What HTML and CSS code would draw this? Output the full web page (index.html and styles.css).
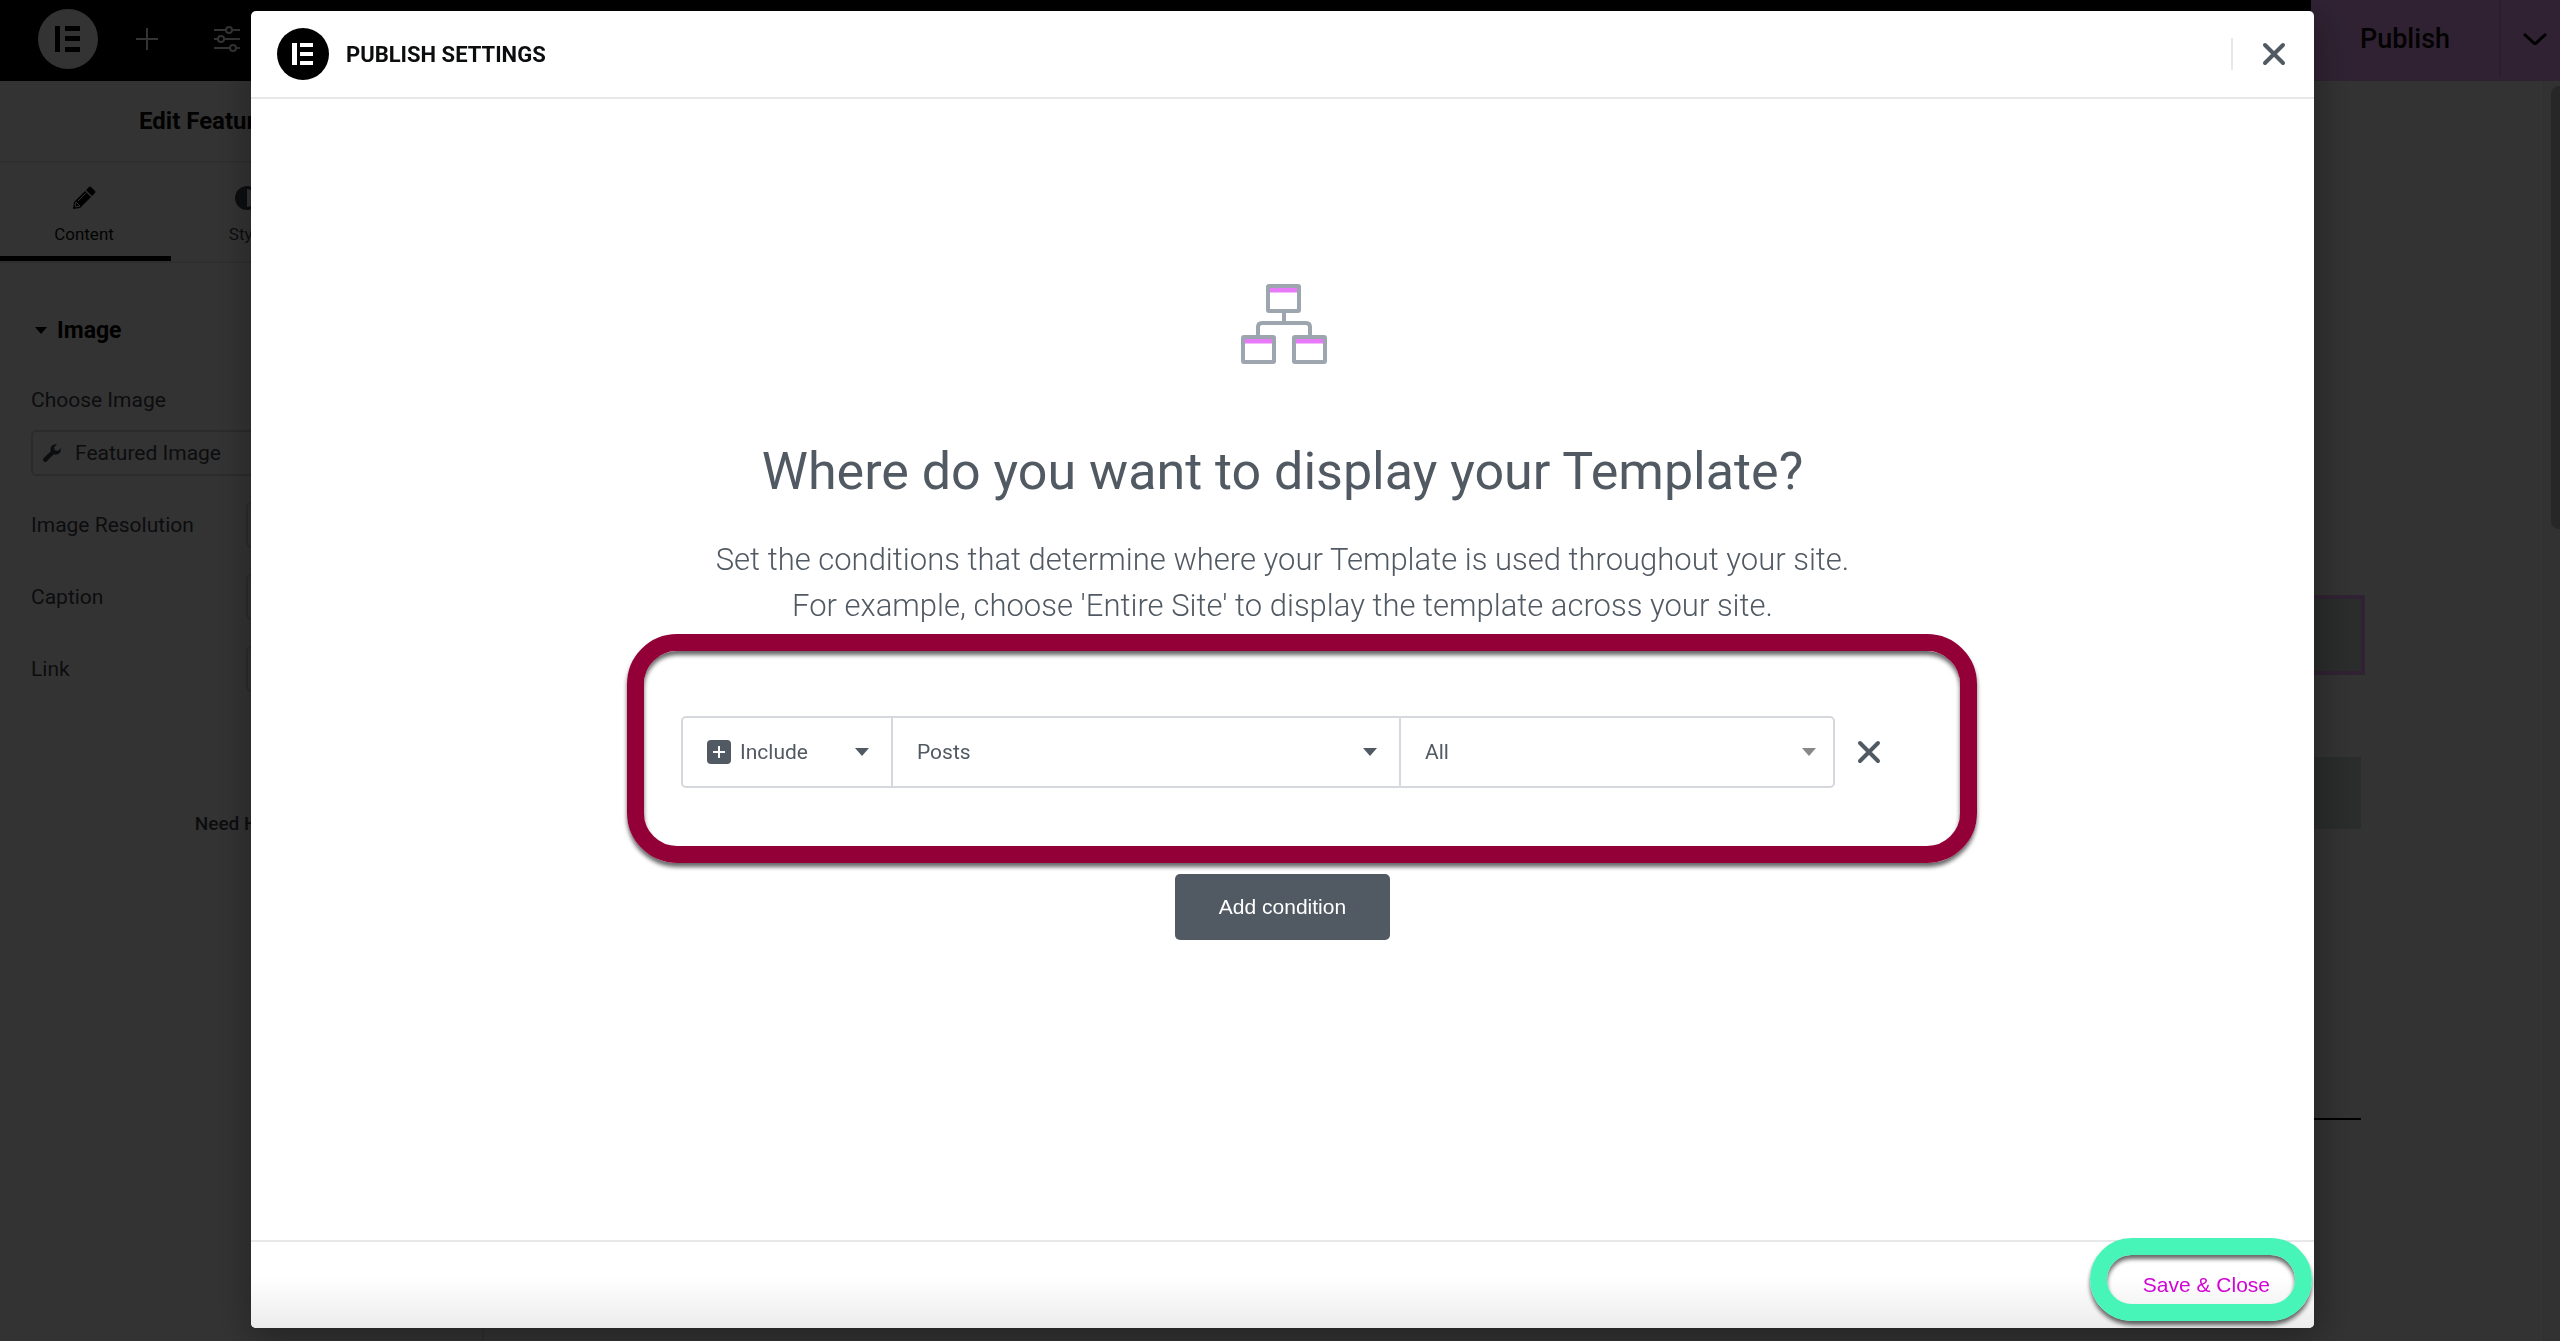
FILE: index.html
```html
<!DOCTYPE html>
<html lang="en">
  <head>
    <meta charset="utf-8" />
    <title>Elementor - Publish Settings</title>
    <meta name="viewport" content="width=device-width, initial-scale=1.0" />
    <link rel="stylesheet" href="styles.css" />
  </head>
  <body>
    <div class="editor">
      <header class="topbar">
        <button class="logo" aria-label="Elementor">
          <svg viewBox="0 0 60 60" width="60" height="60">
            <circle cx="30" cy="30" r="30" fill="currentColor" />
            <path class="mark" d="M17 17h5v26h-5zM27 17h15v5H27zM27 27h15v5H27zM27 38h15v5H27z" />
          </svg>
        </button>
        <button class="tool" aria-label="Add Element">
          <svg viewBox="0 0 24 24" width="24" height="24"><path d="M12 1v22M1 12h22" /></svg>
        </button>
        <button class="tool" aria-label="Site Settings">
          <svg viewBox="0 0 28 28" width="28" height="28">
            <path d="M1 5h12M19 5h8M1 14h3M11 14h16M1 23h16M24 23h3" />
            <circle cx="16" cy="5" r="3" />
            <circle cx="8" cy="14" r="3" />
            <circle cx="20" cy="23" r="3" />
          </svg>
        </button>
        <div class="publish">
          <button class="publish-main">Publish</button>
          <button class="publish-more" aria-label="Save Options">
            <svg viewBox="0 0 24 12" width="24" height="12"><path d="M1 1l11 10L23 1" /></svg>
          </button>
        </div>
      </header>
      <div class="workspace">
        <aside class="panel">
          <h1 class="panel-title">Edit Featured Image</h1>
          <nav class="tabs">
            <button class="tab active">
              <svg viewBox="0 0 24 24" width="24" height="24">
                <path d="M17 1q1-1 2 0l4 4q1 1 0 2l-3 3-6-6zM13 5l6 6L8 22l-7 1 1-7z" />
                <path class="cut" d="M4 16l4 4-4 1-1-1zM6 15l8-8" />
              </svg>
              <span>Content</span>
            </button>
            <button class="tab">
              <svg viewBox="0 0 24 24" width="24" height="24">
                <circle cx="12" cy="12" r="12" />
                <path class="half" d="M12 3a9 9 0 0 1 0 18z" />
              </svg>
              <span>Style</span>
            </button>
            <button class="tab">
              <span>Advanced</span>
            </button>
          </nav>
          <section class="controls">
            <h2 class="section-title">
              <svg viewBox="0 0 12 7" width="12" height="7"><path d="M0 0h12L6 7z" /></svg>
              Image
            </h2>
            <p class="field-label">Choose Image</p>
            <button class="dynamic">
              <svg viewBox="0 0 20 20" width="18" height="18">
                <path d="M19.6 4.6l-3.2 3.1-3.3-.8-.8-3.3L15.500.5C11.800-.6 8 2.300 8.300 6.500c0 .6.100 1.100.3 1.600L.8 15.600c-2.400 2.600 1.200 6 3.600 3.600l7.600-7.700c4.500 1.500 8.800-2.300 7.600-6.900z" />
              </svg>
              Featured Image
            </button>
            <div class="field">
              <label for="resolution">Image Resolution</label>
              <select id="resolution"><option>Large</option></select>
            </div>
            <div class="field">
              <label for="caption">Caption</label>
              <select id="caption"><option>None</option></select>
            </div>
            <div class="field">
              <label for="link">Link</label>
              <select id="link"><option>None</option></select>
            </div>
          </section>
          <a class="help" href="#">Need Help</a>
        </aside>
        <main class="preview">
          <div class="widget selected"></div>
          <div class="widget"></div>
          <hr class="rule" />
        </main>
        <div class="scrollbar"><div class="thumb"></div></div>
      </div>
    </div>

    <div class="overlay">
      <div class="modal" role="dialog" aria-labelledby="modal-title">
        <header class="modal-header">
          <svg class="modal-logo" viewBox="0 0 52 52" width="52" height="52">
            <circle cx="26" cy="26" r="26" />
            <path class="mark" d="M15 15h5v22h-5zM23 15h13v4H23zM23 24h13v4H23zM23 33h13v4H23z" />
          </svg>
          <h2 id="modal-title">Publish Settings</h2>
          <button class="close" aria-label="Close">
            <svg viewBox="0 0 24 24" width="24" height="24"><path d="M3 3l18 18M21 3L3 21" /></svg>
          </button>
        </header>
        <div class="modal-body">
          <svg class="sitemap" viewBox="0 0 86 80" width="86" height="80">
            <path class="bar" d="M29 6h27M4 57h27M55 57h27" />
            <path class="line" d="M43 28v11M17 52v-9q0-4 4-4h44q4 0 4 4v9" />
            <rect class="line" x="27" y="2" width="31" height="25" rx="1" />
            <rect class="line" x="2" y="53" width="31" height="25" rx="1" />
            <rect class="line" x="53" y="53" width="31" height="25" rx="1" />
          </svg>
          <h3 class="question">Where do you want to display your Template?</h3>
          <p class="description">
            Set the conditions that determine where your Template is used throughout your site.<br />
            For example, choose 'Entire Site' to display the template across your site.
          </p>
          <div class="conditions">
            <div class="condition">
              <div class="cell type">
                <svg class="plus" viewBox="0 0 24 24" width="24" height="24">
                  <rect width="24" height="24" rx="4" />
                  <path d="M12 6v12M6 12h12" />
                </svg>
                <select aria-label="Condition type">
                  <option>Include</option>
                  <option>Exclude</option>
                </select>
                <svg class="caret" viewBox="0 0 14 8" width="14" height="8"><path d="M0 0h14L7 8z" /></svg>
              </div>
              <div class="cell name">
                <select aria-label="Condition name">
                  <option>Posts</option>
                </select>
                <svg class="caret" viewBox="0 0 14 8" width="14" height="8"><path d="M0 0h14L7 8z" /></svg>
              </div>
              <div class="cell sub">
                <select aria-label="Condition items">
                  <option>All</option>
                </select>
                <svg class="caret light" viewBox="0 0 14 8" width="14" height="8"><path d="M0 0h14L7 8z" /></svg>
              </div>
            </div>
            <button class="remove" aria-label="Remove condition">
              <svg viewBox="0 0 24 24" width="24" height="24"><path d="M3 3l18 18M21 3L3 21" /></svg>
            </button>
          </div>
          <button class="add">Add condition</button>
        </div>
        <footer class="modal-footer">
          <button class="save">Save &amp; Close</button>
        </footer>
      </div>
    </div>
  </body>
</html>
```

FILE: styles.css
```css
*,
*::after {
  box-sizing: border-box;
}
body {
  margin: 0;
  background: #fff;
  color: #0c0d0e;
  font-family: Roboto, sans-serif;
  font-size: 21px;
  overflow: hidden;
}
h1,
h2,
h3,
p {
  margin: 0;
}
button,
select {
  font: inherit;
  color: inherit;
  background: none;
  border: none;
  padding: 0;
  cursor: pointer;
}
select {
  appearance: none;
}
svg {
  display: block;
  flex: none;
}

/* editor */
.editor {
  display: flex;
  flex-direction: column;
  height: 100vh;
}
.topbar {
  display: flex;
  align-items: center;
  height: 81px;
  padding: 0 0 3px 38px;
  background: #000;
}
.logo {
  color: #fff;
  margin-right: 37px;
}
.logo .mark {
  fill: #000;
}
.tool {
  margin-right: 54px;
}
.tool svg {
  fill: none;
  stroke: #fff;
  stroke-width: 2;
}
.publish {
  display: flex;
  width: 249px;
  height: 81px;
  margin: 0 0 -3px auto;
  padding-bottom: 3px;
  background: #f0abfc;
}
.publish-main {
  flex: 1;
  font-size: 27px;
  font-weight: 500;
}
.publish-more {
  display: flex;
  align-items: center;
  justify-content: center;
  width: 61px;
  border-left: 2px solid #eb8efb;
  padding-left: 9px;
}
.publish-more svg {
  fill: none;
  stroke: #000;
  stroke-width: 3;
}
.workspace {
  display: flex;
  flex: 1;
}
.panel {
  width: 482px;
  color: #3f444b;
}
.panel-title {
  height: 82px;
  line-height: 80px;
  border-bottom: 2px solid #e6e8ea;
  color: #0c0d0e;
  font-size: 24px;
  font-weight: 700;
  padding-left: 139px;
}
.tabs {
  display: flex;
  height: 100px;
  border-bottom: 2px solid #e6e8ea;
}
.tab {
  display: flex;
  flex: 1;
  flex-direction: column;
  align-items: center;
  gap: 14px;
  padding: 23px 3px 0 0;
  font-size: 17px;
}
.tab svg {
  fill: #3f444b;
}
.tab.active {
  flex: none;
  width: 171px;
  color: #0c0d0e;
  border-bottom: 5px solid #000;
}
.tab.active svg {
  fill: #000;
}
.tab .cut {
  fill: none;
  stroke: #fff;
}
.tab .half {
  fill: #fff;
}
.controls {
  padding: 53px 24px 0 31px;
}
.section-title {
  display: flex;
  align-items: center;
  gap: 10px;
  height: 28px;
  padding-left: 4px;
  color: #000;
  font-size: 23px;
  font-weight: 700;
}
.field-label {
  margin: 42px 0 16px;
  line-height: 28px;
}
.dynamic {
  display: flex;
  align-items: center;
  gap: 14px;
  width: 100%;
  height: 46px;
  padding: 0 10px;
  border: 2px solid #d5d8dc;
  border-radius: 5px;
}
.dynamic svg {
  fill: #3f444b;
}
.field {
  display: flex;
  align-items: center;
  justify-content: space-between;
  height: 46px;
  margin-top: 26px;
}
.field select {
  width: 212px;
  height: 46px;
  padding: 0 12px;
  border: 2px solid #d5d8dc;
  border-radius: 5px;
}
.help {
  display: block;
  margin-top: 120px;
  padding-right: 4px;
  color: inherit;
  font-size: 19px;
  font-weight: 500;
  text-align: center;
  text-decoration: none;
}
.preview {
  flex: 1;
  border-left: 2px solid #e6e8ea;
  padding: 518px 182px 0 200px;
}
.widget {
  height: 72px;
  margin-bottom: 86px;
  background: #d5dcda;
}
.widget.selected {
  outline: 4px solid #f0abfc;
}
.rule {
  height: 2px;
  margin: 289px 0 0;
  border: none;
  background: #000;
}
.scrollbar {
  width: 17px;
  padding: 5px 0 0 7px;
  background: #fafafa;
  border-left: 1px solid #e8e8e8;
}
.thumb {
  height: 443px;
  border-radius: 8px 0 0 8px;
  background: #c1c1c1;
}

/* publish modal */
.overlay {
  position: fixed;
  inset: 0;
  display: flex;
  padding: 11px 246px 13px 251px;
  background: rgba(0, 0, 0, 0.8);
}
.modal {
  display: flex;
  flex: 1;
  flex-direction: column;
  border-radius: 5px;
  background: #fff;
  color: #515962;
  box-shadow: 2px 8px 38px 5px rgba(0, 0, 0, 0.3);
}
.modal-header {
  display: flex;
  align-items: center;
  height: 88px;
  padding: 0 28px 0 26px;
  border-bottom: 2px solid #e6e8ea;
}
.modal-logo {
  margin-right: 17px;
}
.modal-logo .mark {
  fill: #fff;
}
.modal-header h2 {
  color: #0c0d0e;
  font-size: 22px;
  font-weight: 700;
  text-transform: uppercase;
}
.close {
  height: 32px;
  margin-left: auto;
  padding-left: 29px;
  border-left: 2px solid #e6e8ea;
}
.close svg,
.remove svg {
  fill: none;
  stroke: #515962;
  stroke-width: 4;
  stroke-linecap: round;
}
.modal-body {
  display: flex;
  flex: 1;
  flex-direction: column;
  align-items: center;
  padding-top: 185px;
}
.sitemap {
  margin-left: 3px;
}
.sitemap .line {
  fill: none;
  stroke: #9da5ae;
  stroke-width: 4;
}
.sitemap .bar {
  stroke: #e879f9;
  stroke-width: 5;
}
.question {
  margin-top: 76px;
  font-size: 52px;
  font-weight: 400;
  line-height: 64px;
}
.description {
  margin-top: 33px;
  font-size: 31px;
  font-weight: 300;
  line-height: 46px;
  text-align: center;
}
.conditions {
  position: relative;
  display: flex;
  align-items: center;
  width: 1200px;
  margin: 87px 3px 0 0;
}
/* rings that point at the parts to use */
.conditions::after,
.modal-footer::after {
  content: "";
  position: absolute;
  border: 17px solid #930038;
  border-radius: 50px;
  box-shadow: 0 4px 4px rgba(0, 0, 0, 0.6), inset 0 4px 4px rgba(0, 0, 0, 0.6);
  pointer-events: none;
}
.conditions::after {
  inset: -82px -96px -75px -54px;
}
.condition {
  display: flex;
  flex: 1;
  height: 72px;
  border: 2px solid #d5d8dc;
  border-radius: 5px;
}
.cell {
  display: flex;
  align-items: center;
  padding: 0 22px 0 24px;
}
.cell + .cell {
  border-left: 2px solid #d5d8dc;
}
.cell select {
  flex: 1;
  min-width: 0;
  height: 100%;
}
.type {
  width: 208px;
}
.name {
  width: 508px;
}
.sub {
  flex: 1;
  padding-right: 17px;
}
.plus {
  margin-right: 9px;
  fill: #515962;
}
.plus path {
  stroke: #fff;
  stroke-width: 2;
}
.caret {
  fill: #515962;
}
.caret.light {
  fill: #888;
}
.remove {
  margin-left: 22px;
}
.add,
.save {
  font-family: "Liberation Sans", Arial, sans-serif;
}
.add {
  width: 215px;
  height: 66px;
  margin-top: 86px;
  border-radius: 5px;
  background: #515962;
  color: #fff;
}
.modal-footer {
  position: relative;
  display: flex;
  align-items: center;
  justify-content: flex-end;
  height: 88px;
  padding-right: 44px;
  border-top: 2px solid #e6e8ea;
  border-radius: 0 0 5px 5px;
  background: linear-gradient(#fff 40%, #ececed);
}
.modal-footer::after {
  top: -4px;
  right: 2px;
  width: 222px;
  height: 83px;
  border-color: #47f5b9;
}
.save {
  color: #d004d4;
}
```
